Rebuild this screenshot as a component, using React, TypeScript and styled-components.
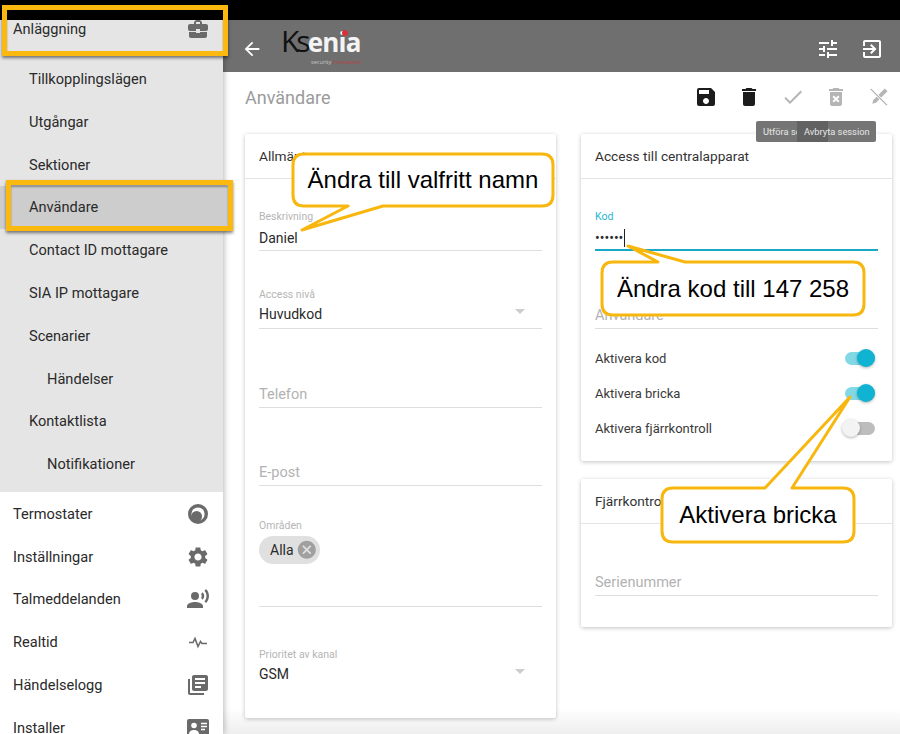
import React from 'react';
import styled, { createGlobalStyle } from 'styled-components';
import {
  MdArrowBack,
  MdBusinessCenter,
  MdCancel,
  MdCheck,
  MdDelete,
  MdDeleteForever,
  MdExitToApp,
  MdLibraryBooks,
  MdRecordVoiceOver,
  MdSave,
  MdSettings,
  MdTune,
} from 'react-icons/md';

const GlobalStyle = createGlobalStyle`
  html, body {
    margin: 0;
    padding: 0;
    height: 734px;
    overflow: hidden;
    background: #fff;
    font-family: Roboto, "Liberation Sans", sans-serif;
  }
`;

const Screen = styled.div`
  position: relative;
  width: 900px;
  height: 734px;
  overflow: hidden;
`;

const StatusBar = styled.div`
  position: relative;
  z-index: 3;
  height: 20px;
  background: #000;
`;

const Body = styled.div`
  display: flex;
  height: 714px;
`;

const Sidebar = styled.nav`
  position: relative;
  z-index: 2;
  flex: 0 0 223px;
  width: 223px;
  margin-top: -12.4px;
  background: #fff;
  box-shadow: 1px 0 6px rgba(0, 0, 0, 0.28);
`;

const NavGroup = styled.div`
  background: #e5e5e5;
  padding-bottom: 6.9px;
`;

const SubList = styled.div`
  padding-top: 7.2px;
`;

const NavItem = styled.div<{ $level?: number; $active?: boolean }>`
  display: flex;
  align-items: center;
  justify-content: space-between;
  height: 42.8px;
  padding: 0 13px 0 ${(p) => [13, 29, 47][p.$level ?? 0]}px;
  font-size: 14.6px;
  color: #2a2a2a;
  background: ${(p) => (p.$active ? '#cdcdcd' : 'transparent')};
  margin-right: ${(p) => (p.$active ? '-5px' : '0')};
  svg {
    color: #6a6a6a;
  }
`;

const Main = styled.main`
  flex: 1;
  min-width: 0;
  display: flex;
  flex-direction: column;
  background: linear-gradient(#fff 0, #fff 688px, #eeeeee 714px);
`;

const TopBar = styled.header`
  display: flex;
  align-items: center;
  box-sizing: border-box;
  height: 52px;
  padding: 6px 16px 0 18px;
  background: #6f6f6f;
  color: #fff;
`;

const Logo = styled.div`
  position: relative;
  margin: -6px 0 0 18px;
  width: 90px;
  height: 44px;
  font-family: "Open Sans", sans-serif;
`;

const LogoName = styled.div`
  display: flex;
  align-items: baseline;
  height: 34px;
  line-height: 34px;
`;

const LogoKs = styled.span`
  font-size: 30px;
  letter-spacing: -3px;
  color: #111;
`;

const LogoRest = styled.span`
  font-size: 26px;
  font-weight: 700;
  letter-spacing: -0.8px;
  color: #f4f4f4;
`;

const LogoDot = styled.i`
  position: absolute;
  left: 61px;
  top: 6px;
  width: 6px;
  height: 6px;
  border-radius: 50%;
  background: #d8303a;
`;

const LogoTag = styled.div`
  font-size: 5.6px;
  line-height: 8px;
  padding-left: 30px;
  color: #c9c9c9;
  white-space: nowrap;
  span {
    color: #b8423f;
  }
`;

const TopActions = styled.div`
  margin-left: auto;
  display: flex;
  gap: 20px;
  font-size: 24px;
`;

const TitleRow = styled.div`
  position: relative;
  display: flex;
  align-items: center;
  justify-content: space-between;
  box-sizing: border-box;
  height: 52px;
  padding: 0 9px 2px 22px;
`;

const PageTitle = styled.h1`
  margin: 0;
  font-size: 18px;
  font-weight: 400;
  color: #9b9b9b;
`;

const Tools = styled.div`
  display: flex;
  gap: 19.25px;
`;

const Tool = styled.span<{ $off?: boolean }>`
  display: flex;
  font-size: 24px;
  color: ${(p) => (p.$off ? '#b5b5b5' : '#1c1c1c')};
`;

const Tooltips = styled.div`
  position: absolute;
  top: 49px;
  right: 24px;
  width: 120px;
  height: 21px;
  border-radius: 2px;
  background: #757575;
  color: #e6e6e6;
  font-size: 9.3px;
  line-height: 21px;
  white-space: nowrap;
`;

const TipBack = styled.span`
  position: absolute;
  left: 7px;
  width: 34px;
  overflow: hidden;
`;

const TipFront = styled.span`
  position: absolute;
  left: 41px;
  width: 79px;
  padding-left: 7px;
  box-sizing: border-box;
  background: linear-gradient(to right, #626262 31px, transparent 31px);
`;

const Columns = styled.div`
  display: grid;
  grid-template-columns: 311px 311px;
  gap: 25px;
  padding: 10px 0 0 22px;
  align-items: start;
`;

const Column = styled.div`
  display: flex;
  flex-direction: column;
  gap: 18px;
`;

const Card = styled.section<{ $height: number }>`
  height: ${(p) => p.$height}px;
  background: #fff;
  border-radius: 2px;
  box-shadow: 0 1px 4px rgba(0, 0, 0, 0.24);
`;

const CardHead = styled.div`
  height: 44px;
  padding-left: 14px;
  display: flex;
  align-items: center;
  font-size: 13.7px;
  color: #333;
  border-bottom: 1px solid #e4e4e4;
`;

const CardBody = styled.div`
  padding: 0 14px;
`;

const Field = styled.div<{ $height: number; $active?: boolean; $flat?: boolean; $select?: boolean }>`
  position: relative;
  height: ${(p) => p.$height}px;
  display: flex;
  flex-direction: column;
  justify-content: flex-end;
  padding-bottom: ${(p) => (p.$select ? 3 : p.$active ? 0 : 1)}px;
  box-sizing: border-box;
  border-bottom: ${(p) =>
    p.$flat ? '1px solid transparent' : p.$active ? '2px solid #17a9c6' : '1px solid #dedede'};
`;

const FieldLabel = styled.label<{ $active?: boolean; $select?: boolean }>`
  font-size: 10.5px;
  line-height: 14px;
  margin-bottom: ${(p) => (p.$select ? 1 : 3)}px;
  color: ${(p) => (p.$active ? '#26b7d0' : '#b5b5b5')};
`;

const FieldValue = styled.div`
  font-size: 14px;
  line-height: 22px;
  color: #2a2a2a;
`;

const Placeholder = styled.div`
  font-size: 14.5px;
  line-height: 22px;
  color: #b2b2b2;
`;

const Caret = styled.i`
  position: absolute;
  right: 17px;
  bottom: 14px;
  width: 0;
  height: 0;
  border: 5px solid transparent;
  border-top-color: #cdcdcd;
  border-bottom: 0;
`;

const Cursor = styled.i`
  display: inline-block;
  width: 1px;
  height: 18px;
  margin-left: 1px;
  background: #222;
  vertical-align: -4px;
`;

const Chip = styled.div`
  display: inline-flex;
  align-self: flex-start;
  align-items: center;
  gap: 2px;
  height: 28px;
  margin-bottom: 41px;
  padding: 0 3px 0 11px;
  border-radius: 14px;
  background: #e0e0e0;
  font-size: 14px;
  color: #2a2a2a;
  svg {
    color: #a0a0a0;
    font-size: 21.6px;
  }
`;

const ToggleSpacer = styled.div`
  height: 12px;
`;

const ToggleRow = styled.div`
  display: flex;
  align-items: center;
  justify-content: space-between;
  height: 35px;
  padding-right: 3px;
  font-size: 13px;
  color: #3a3a3a;
`;

const Track = styled.span<{ $on?: boolean }>`
  position: relative;
  width: 30px;
  height: 13px;
  border-radius: 7px;
  background: ${(p) => (p.$on ? '#83d8e6' : '#bdbdbd')};
  &::after {
    content: '';
    position: absolute;
    top: -3px;
    left: ${(p) => (p.$on ? '12px' : '-3px')};
    width: 18px;
    height: 18px;
    border-radius: 50%;
    background: ${(p) => (p.$on ? '#10b4d2' : '#f3f3f3')};
    box-shadow: 0 1px 3px rgba(0, 0, 0, 0.3);
  }
`;

const Highlight = styled.div<{ $x: number; $y: number; $w: number; $h: number }>`
  position: absolute;
  z-index: 4;
  left: ${(p) => p.$x}px;
  top: ${(p) => p.$y}px;
  width: ${(p) => p.$w}px;
  height: ${(p) => p.$h}px;
  box-sizing: border-box;
  border: 5px solid #fbb80f;
  box-shadow: 0 2px 3px rgba(0, 0, 0, 0.5), inset 0 2px 2px rgba(0, 0, 0, 0.35);
`;

const CalloutShape = styled.svg`
  position: absolute;
  z-index: 5;
  left: 0;
  top: 0;
  width: 900px;
  height: 734px;
  pointer-events: none;
`;

const CalloutText = styled.div<{ $x: number; $y: number; $w: number; $h: number }>`
  position: absolute;
  z-index: 6;
  left: ${(p) => p.$x}px;
  top: ${(p) => p.$y}px;
  width: ${(p) => p.$w}px;
  height: ${(p) => p.$h}px;
  display: flex;
  align-items: center;
  justify-content: center;
  font-family: "Liberation Sans", Arial, sans-serif;
  font-size: 24px;
  color: #000;
`;

function PulseIcon() {
  return (
    <svg width="24" height="24" viewBox="0 0 24 24" fill="none" stroke="currentColor" strokeWidth="1.6">
      <path d="M3 12.5h4l2-4 3 8 2.5-5 1.5 2h5" />
    </svg>
  );
}

function DialIcon() {
  return (
    <svg width="24" height="24" viewBox="0 0 24 24">
      <circle cx="12" cy="12" r="10" fill="currentColor" />
      <circle cx="12" cy="12" r="6.6" fill="#fff" />
      <circle cx="10.6" cy="14.4" r="5.4" fill="currentColor" />
    </svg>
  );
}

function InstallerIcon() {
  return (
    <svg width="24" height="24" viewBox="0 0 24 24">
      <rect x="1" y="3" width="22" height="18" rx="2" fill="currentColor" />
      <circle cx="8" cy="9.5" r="2.8" fill="#fff" />
      <path d="M3 18c0-2.8 2.5-4 5-4s5 1.2 5 4z" fill="#fff" />
      <path d="M15 7.5h6M15 10.5h6M15 13.5h4" stroke="#fff" strokeWidth="1.4" />
    </svg>
  );
}

function NoToolsIcon() {
  return (
    <svg width="24" height="24" viewBox="0 0 24 24" fill="currentColor">
      <path d="M17.8 3.5l2.7 2.7L9 17.7 5.3 18.7l1-3.7z" />
      <path d="M4.4 3.2L20.8 19.6l-1.4 1.4L3 4.6z" stroke="#fff" strokeWidth="1" />
    </svg>
  );
}

const menuTop = ['Tillkopplingslägen', 'Utgångar', 'Sektioner', 'Användare', 'Contact ID mottagare', 'SIA IP mottagare', 'Scenarier'];

// x, y, w, h of the bubble, and the three tail points
function bubblePath(x: number, y: number, w: number, h: number, tail: number[]) {
  const r = 11;
  const [ax, tx, ty, bx] = tail;
  const onTop = ty < y;
  const edge = onTop ? y : y + h;
  if (onTop) {
    return `M${x + r} ${y}H${bx}L${tx} ${ty}L${ax} ${edge}H${x + w - r}Q${x + w} ${y} ${x + w} ${y + r}V${y + h - r}Q${x + w} ${y + h} ${x + w - r} ${y + h}H${x + r}Q${x} ${y + h} ${x} ${y + h - r}V${y + r}Q${x} ${y} ${x + r} ${y}Z`;
  }
  return `M${x + r} ${y}H${x + w - r}Q${x + w} ${y} ${x + w} ${y + r}V${y + h - r}Q${x + w} ${y + h} ${x + w - r} ${y + h}H${ax}L${tx} ${ty}L${bx} ${edge}H${x + r}Q${x} ${y + h} ${x} ${y + h - r}V${y + r}Q${x} ${y} ${x + r} ${y}Z`;
}

const bubbles = [
  { x: 293, y: 154, w: 260, h: 52, tail: [383, 302, 230, 348], text: 'Ändra till valfritt namn' },
  { x: 602, y: 262, w: 262, h: 53, tail: [685, 628, 246, 658], text: 'Ändra kod till 147 258' },
  { x: 662, y: 488, w: 192, h: 54, tail: [792, 850, 397, 765], text: 'Aktivera bricka' },
];

export default function App() {
  return (
    <Screen>
      <GlobalStyle />
      <StatusBar />
      <Body>
        <Sidebar>
          <NavGroup>
            <NavItem>
              Anläggning
              <MdBusinessCenter size={24} />
            </NavItem>
            <SubList>
              {menuTop.map((m) => (
                <NavItem key={m} $level={1} $active={m === 'Användare'}>{m}</NavItem>
              ))}
              <NavItem $level={2}>Händelser</NavItem>
              <NavItem $level={1}>Kontaktlista</NavItem>
              <NavItem $level={2}>Notifikationer</NavItem>
            </SubList>
          </NavGroup>
          <NavItem>Termostater<DialIcon /></NavItem>
          <NavItem>Inställningar<MdSettings size={24} /></NavItem>
          <NavItem>Talmeddelanden<MdRecordVoiceOver size={24} /></NavItem>
          <NavItem>Realtid<PulseIcon /></NavItem>
          <NavItem>Händelselogg<MdLibraryBooks size={24} /></NavItem>
          <NavItem>Installer<InstallerIcon /></NavItem>
        </Sidebar>
        <Main>
          <TopBar>
            <MdArrowBack size={22} />
            <Logo>
              <LogoName>
                <LogoKs>Ks</LogoKs>
                <LogoRest>enia</LogoRest>
              </LogoName>
              <LogoDot />
              <LogoTag>security <span>innovation</span></LogoTag>
            </Logo>
            <TopActions>
              <MdTune />
              <MdExitToApp />
            </TopActions>
          </TopBar>
          <TitleRow>
            <PageTitle>Användare</PageTitle>
            <Tools>
              <Tool><MdSave /></Tool>
              <Tool><MdDelete /></Tool>
              <Tool $off><MdCheck /></Tool>
              <Tool $off><MdDeleteForever /></Tool>
              <Tool $off><NoToolsIcon /></Tool>
            </Tools>
            <Tooltips>
              <TipBack>Utföra session</TipBack>
              <TipFront>Avbryta session</TipFront>
            </Tooltips>
          </TitleRow>
          <Columns>
            <Column>
              <Card $height={584}>
                <CardHead>Allmänt</CardHead>
                <CardBody>
                  <Field $height={72}>
                    <FieldLabel>Beskrivning</FieldLabel>
                    <FieldValue>Daniel</FieldValue>
                  </Field>
                  <Field $height={78} $select>
                    <FieldLabel $select>Access nivå</FieldLabel>
                    <FieldValue>Huvudkod</FieldValue>
                    <Caret />
                  </Field>
                  <Field $height={79}>
                    <Placeholder>Telefon</Placeholder>
                  </Field>
                  <Field $height={78}>
                    <Placeholder>E-post</Placeholder>
                  </Field>
                  <Field $height={121}>
                    <FieldLabel>Områden</FieldLabel>
                    <Chip>Alla<MdCancel /></Chip>
                  </Field>
                  <Field $height={82} $flat $select>
                    <FieldLabel $select>Prioritet av kanal</FieldLabel>
                    <FieldValue>GSM</FieldValue>
                    <Caret />
                  </Field>
                </CardBody>
              </Card>
            </Column>
            <Column>
              <Card $height={327}>
                <CardHead>Access till centralapparat</CardHead>
                <CardBody>
                  <Field $height={72} $active>
                    <FieldLabel $active>Kod</FieldLabel>
                    <FieldValue>••••••<Cursor /></FieldValue>
                  </Field>
                  <Field $height={78}>
                    <Placeholder>Användare</Placeholder>
                  </Field>
                  <ToggleSpacer />
                  <ToggleRow>Aktivera kod<Track $on /></ToggleRow>
                  <ToggleRow>Aktivera bricka<Track $on /></ToggleRow>
                  <ToggleRow>Aktivera fjärrkontroll<Track /></ToggleRow>
                </CardBody>
              </Card>
              <Card $height={148}>
                <CardHead>Fjärrkontroll</CardHead>
                <CardBody>
                  <Field $height={72}>
                    <Placeholder>Serienummer</Placeholder>
                  </Field>
                </CardBody>
              </Card>
            </Column>
          </Columns>
        </Main>
      </Body>
      <Highlight $x={2} $y={5} $w={226} $h={51} />
      <Highlight $x={6} $y={180} $w={227} $h={51} />
      <CalloutShape viewBox="0 0 900 734">
        {bubbles.map((b) => (
          <path
            key={b.text}
            d={bubblePath(b.x, b.y, b.w, b.h, b.tail)}
            fill="#fff"
            stroke="#f8b70f"
            strokeWidth="3"
            strokeLinejoin="round"
          />
        ))}
      </CalloutShape>
      {bubbles.map((b) => (
        <CalloutText key={b.text} $x={b.x} $y={b.y} $w={b.w} $h={b.h}>
          {b.text}
        </CalloutText>
      ))}
    </Screen>
  );
}
